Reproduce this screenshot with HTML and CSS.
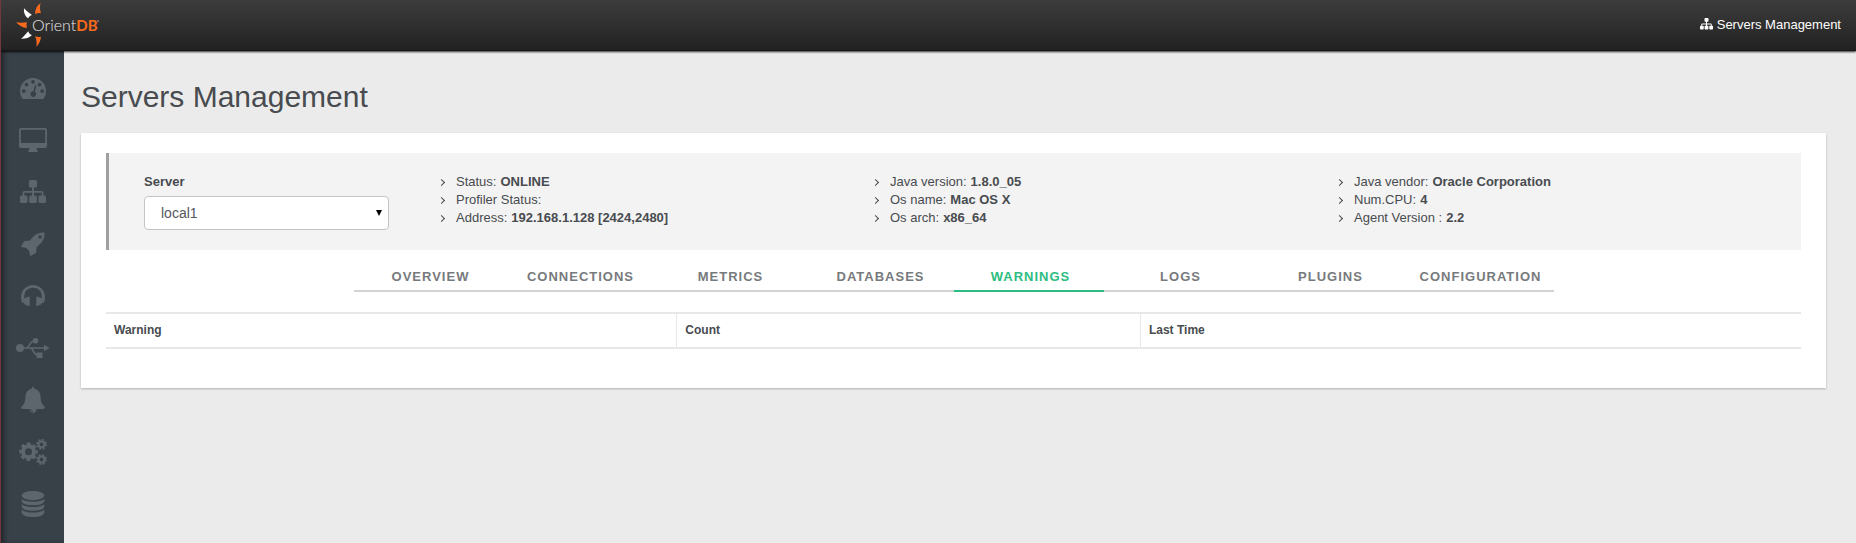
FILE: index.html
```html
<!DOCTYPE html>
<html lang="en">
<head>
<meta charset="utf-8">
<meta name="viewport" content="width=device-width, initial-scale=1">
<title>OrientDB - Servers Management</title>
<link rel="stylesheet" href="styles.css">
</head>
<body>
<header class="topbar">
  <a class="logo" href="#" aria-label="OrientDB">
    <svg width="86" height="50" viewBox="0 0 86 50">
      <g fill="#f96a1d">
        <path d="M25.5 3.2C21.5 6 20 10 20.2 14.2C21.8 13 23.800 12.800 26 13.300C25 10 24.600 7 25.500 3.200Z"/>
        <path d="M1 22.300C4.500 22.800 8.500 22.800 12 22.200C11.300 24 11.400 26 12 28C7.500 27.800 4.500 25.500 1 22.300Z"/>
        <path d="M20.200 36C21.800 37 23.800 37.300 26 36.800C25.500 40.500 24.500 44 21.200 46.800C22.200 43 21.500 39.500 20.200 36Z"/>
      </g>
      <g fill="#fff">
        <path d="M9 8.300C11.500 11.500 14.500 13 17 15C15 15.500 13.800 16.800 13.300 18.300C9.800 16.200 8.600 12.500 9 8.300Z"/>
        <path d="M6 38.800C9 36.500 11 33.500 13.300 31.200C13.800 33.200 15 34.500 17 35C14 37.800 10.500 39 6 38.800Z"/>
      </g>
      <text x="17" y="31" class="logo-text">Orient<tspan class="logo-db">DB</tspan></text>
      <circle cx="83" cy="21" r="1" fill="#99796a"/>
    </svg>
  </a>
  <a class="top-link" href="#">
    <svg width="13" height="12" viewBox="0 0 26 24" fill="currentColor"><use href="#sitemap"/></svg>
    Servers Management
  </a>
</header>
<div class="layout">
  <nav class="sidebar" aria-label="Main">
    <a href="#" aria-label="Dashboard"><svg width="26" height="21" viewBox="0 0 26 21" fill="currentColor"><path fill-rule="evenodd" d="M13 0A13 13 0 0 1 26 13Q26 17 24 20.300Q23.600 21 23 21H3Q2.400 21 2 20.300Q0 17 0 13A13 13 0 0 1 13 0ZM13 2a1.900 1.900 0 1 0 0 3.800a1.900 1.900 0 0 0 0-3.800ZM6.500 4.700a1.900 1.900 0 1 0 0 3.800a1.900 1.900 0 0 0 0-3.800ZM19.500 4.700a1.900 1.900 0 1 0 0 3.800a1.900 1.900 0 0 0 0-3.800ZM3.800 11.200a1.900 1.900 0 1 0 0 3.800a1.900 1.900 0 0 0 0-3.800ZM22.200 11.200a1.900 1.900 0 1 0 0 3.800a1.900 1.900 0 0 0 0-3.800ZM14.900 7.400L13.400 13.200A2.900 2.900 0 1 0 14.900 13.700L16.400 7.800Q16.200 6.900 14.900 7.400Z"/></svg></a>
    <a href="#" aria-label="Monitor"><svg width="28" height="24" viewBox="0 0 28 24" fill="currentColor"><path fill-rule="evenodd" d="M2 0H26Q28 0 28 2V18Q28 20 26 20H17.500Q17.500 21.500 18.800 22.600Q19 24 18 24H10Q9 24 9.200 22.600Q10.500 21.500 10.500 20H2Q0 20 0 18V2Q0 0 2 0ZM2.500 1.700Q1.800 1.700 1.800 2.400V14.200Q1.800 15 2.500 15H25.500Q26.200 15 26.200 14.200V2.400Q26.200 1.700 25.500 1.700Z"/></svg></a>
    <a href="#" aria-label="Cluster"><svg width="26" height="24" viewBox="0 0 26 24" fill="currentColor"><path id="sitemap" d="M10.500 0H15.500Q17 0 17 1.500V6Q17 7.500 15.500 7.500H14V11H21.500Q23.500 11 23.500 13V15.500H24.500Q26 15.500 26 17V21.500Q26 23 24.500 23H20Q18.500 23 18.500 21.500V17Q18.500 15.500 20 15.500H21.700V12.800H14V15.500H15.300Q16.800 15.500 16.800 17V21.500Q16.800 23 15.300 23H10.700Q9.200 23 9.200 21.500V17Q9.200 15.500 10.700 15.500H12V12.800H4.300V15.500H6Q7.500 15.500 7.500 17V21.500Q7.500 23 6 23H1.500Q0 23 0 21.500V17Q0 15.500 1.500 15.500H2.500V13Q2.500 11 4.500 11H12V7.500H10.500Q9 7.500 9 6V1.500Q9 0 10.500 0Z"/></svg></a>
    <a href="#" aria-label="Deploy"><svg width="24" height="24" viewBox="0 0 24 24" fill="currentColor"><path fill-rule="evenodd" d="M23.600 .4Q24 8 18.500 12.500L15.600 15.300L15.200 20.400Q15.100 20.800 14.800 21L9.800 23.900Q9.300 24 9.100 23.500L8 18.800L5.200 16L.6 14.900Q0 14.700 .2 14.200L3 9.300Q3.200 9 3.600 8.900L8.700 8.500L11.500 5.500Q16 .2 23.600 .4ZM19 3.200a1.800 1.800 0 1 0 0 3.600a1.800 1.800 0 0 0 0-3.600Z"/></svg></a>
    <a href="#" aria-label="Support"><svg width="24" height="22" viewBox="0 0 24 22" fill="currentColor"><path d="M12 0A12 12 0 0 1 24 12Q24 15 23 17.500L21 18Q20.300 20.200 16.800 20.500Q16.600 21.200 15.300 21V11.700Q16.700 11.400 16.900 12.100Q19.500 12.200 20.900 13.800Q21.300 3 12 2.700Q2.700 3 3.100 13.800Q4.500 12.200 7.100 12.100Q7.300 11.400 8.700 11.700V21Q7.400 21.200 7.200 20.500Q3.700 20.300 3 18L1 17.500Q0 15 0 12A12 12 0 0 1 12 0Z"/></svg></a>
    <a href="#" aria-label="Connections"><svg width="34" height="20" viewBox="0 0 34 20" fill="currentColor"><circle cx="4" cy="10" r="4"/><circle cx="19.500" cy="2.800" r="2.800"/><path d="M20.500 14.500h6v5.500h-6zM28 6.700L33.600 10L28 13.300Z"/><path d="M4 10H29M10 10C14 10 13 2.800 19 2.800M14 10C18 10 17 17.200 22 17.200" fill="none" stroke="currentColor" stroke-width="1.600"/></svg></a>
    <a href="#" aria-label="Alerts"><svg width="24" height="26" viewBox="0 0 24 26" fill="currentColor"><path d="M12 0Q13.500 .2 13.300 1.800Q19.400 3 19.600 10Q19.700 17.500 24 20Q24 22 22 22H15.500Q15.200 25.700 12 25.900Q8.800 25.700 8.500 22H2Q0 22 0 20Q4.300 17.500 4.400 10Q4.600 3 10.700 1.800Q10.500 .2 12 0Z"/><path d="M9.500 22.300Q9.800 24.500 12 24.700" class="bell-cut"/></svg></a>
    <a href="#" aria-label="Settings"><svg width="28" height="26" viewBox="0 0 28 26" fill="none" stroke="currentColor"><circle cx="9.500" cy="12.700" r="5.500" stroke-width="4"/><circle cx="9.500" cy="12.700" r="8" stroke-width="2.600" stroke-dasharray="3.700 2.583" stroke-dashoffset="1.850"/><circle cx="22.500" cy="5.300" r="2.900" stroke-width="2"/><circle cx="22.500" cy="5.300" r="4.500" stroke-width="1.800" stroke-dasharray="2 1.534"/><circle cx="22.500" cy="20.500" r="2.900" stroke-width="2"/><circle cx="22.500" cy="20.500" r="4.500" stroke-width="1.800" stroke-dasharray="2 1.534"/></svg></a>
    <a href="#" aria-label="Databases"><svg width="24" height="26" viewBox="0 0 24 26" fill="currentColor"><ellipse cx="12" cy="4.600" rx="11.300" ry="4.600"/><path d="M.7 8Q4 10.800 12 10.800T23.300 8V10.500Q22 14.200 12 14.200T.7 10.500ZM.7 13.300Q4 16.100 12 16.100T23.300 13.300V15.800Q22 19.800 12 19.800T.7 15.800ZM.7 18.800Q4 21.600 12 21.600T23.300 18.800V21.800Q22 26 12 26T.7 21.800Z"/></svg></a>
  </nav>
  <main class="content">
    <h1>Servers Management</h1>
    <section class="card">
      <div class="summary">
        <div class="server">
          <label for="server">Server</label>
          <div class="select-wrap">
            <select id="server"><option>local1</option></select>
          </div>
        </div>
        <ul class="facts">
          <li>Status: <b>ONLINE</b></li>
          <li>Profiler Status:</li>
          <li>Address: <b>192.168.1.128 [2424,2480]</b></li>
        </ul>
        <ul class="facts">
          <li>Java version: <b>1.8.0_05</b></li>
          <li>Os name: <b>Mac OS X</b></li>
          <li>Os arch: <b>x86_64</b></li>
        </ul>
        <ul class="facts">
          <li>Java vendor: <b>Oracle Corporation</b></li>
          <li>Num.CPU: <b>4</b></li>
          <li>Agent Version : <b>2.2</b></li>
        </ul>
      </div>
      <nav class="tabs" aria-label="Server sections">
        <a href="#">OVERVIEW</a>
        <a href="#">CONNECTIONS</a>
        <a href="#">METRICS</a>
        <a href="#">DATABASES</a>
        <a href="#" class="active" aria-current="page">WARNINGS</a>
        <a href="#">LOGS</a>
        <a href="#">PLUGINS</a>
        <a href="#">CONFIGURATION</a>
      </nav>
      <table class="grid">
        <colgroup><col class="col-warning"><col class="col-count"><col></colgroup>
        <thead>
          <tr><th scope="col">Warning</th><th scope="col">Count</th><th scope="col">Last Time</th></tr>
        </thead>
      </table>
    </section>
  </main>
</div>
</body>
</html>
```
FILE: styles.css
```css
*,
*::before,
*::after {
  box-sizing: border-box;
}

body {
  margin: 0;
  min-height: 100vh;
  display: flex;
  flex-direction: column;
  border-left: 1px solid #713842;
  background: #ebebeb;
  color: #484b4f;
  font: 13px/18px "Liberation Sans", Arial, sans-serif;
}

a {
  color: inherit;
  text-decoration: none;
}

.topbar {
  position: relative;
  display: flex;
  align-items: center;
  justify-content: space-between;
  height: 51px;
  padding: 0 15px 1px 14px;
  border-bottom: 1px solid #161616;
  background: linear-gradient(#3c3c3c, #222);
  box-shadow: 0 1px 2px rgba(0, 0, 0, 0.8);
  color: #fff;
}

.logo svg,
.sidebar svg {
  display: block;
}

.logo-text {
  font: 300 16px Lato, sans-serif;
  fill: #e8e8e8;
}

.logo-db {
  font-size: 15px;
  font-weight: 700;
  fill: #f96a1d;
}

.top-link svg {
  vertical-align: -1px;
}

.layout {
  display: flex;
  flex: 1;
}

.sidebar {
  display: flex;
  flex-direction: column;
  flex: none;
  width: 63px;
  padding-top: 11px;
  background: #384048;
  box-shadow: inset 5px 0 5px -2px rgba(0, 0, 0, 0.4);
  color: #5e666d;
}

.sidebar a {
  display: flex;
  align-items: center;
  justify-content: center;
  height: 52px;
}

.bell-cut {
  fill: none;
  stroke: #384048;
}

.content {
  flex: 1;
  padding: 26px 30px 26px 17px;
}

h1 {
  margin: 0 0 16px;
  font-size: 30px;
  font-weight: 400;
  line-height: 40px;
}

.card {
  padding: 20px 25px 39px;
  background: #fff;
  box-shadow: 0 1px 2px rgba(0, 0, 0, 0.25);
}

.summary {
  display: grid;
  grid-template-columns: 295fr 434fr 464fr 464fr;
  padding: 20px 0 20px 35px;
  border-left: 3px solid #a0a0a0;
  background: #f3f3f3;
}

.server {
  padding-right: 50px;
}

.server label {
  display: block;
  margin-bottom: 5px;
  font-weight: 700;
}

.select-wrap {
  position: relative;
}

.select-wrap::after {
  content: "";
  position: absolute;
  top: 14px;
  right: 7px;
  border: 3px solid transparent;
  border-top: 6px solid #000;
  border-bottom: 0;
  pointer-events: none;
}

select {
  appearance: none;
  display: block;
  width: 100%;
  height: 34px;
  padding: 0 16px;
  border: 1px solid #c4c4c4;
  border-radius: 4px;
  background: #fff;
  color: #55585c;
  font: 14px "Liberation Sans", Arial, sans-serif;
}

.facts {
  margin: 0;
  padding: 0;
  list-style: none;
}

.facts li {
  display: flex;
  align-items: center;
  gap: 4px;
}

.facts li::before {
  content: "";
  width: 5px;
  height: 5px;
  margin-right: 8px;
  border: solid #484b4f;
  border-width: 1px 1px 0 0;
  transform: rotate(45deg);
}

.tabs {
  display: grid;
  grid-template-columns: repeat(8, 150px);
  justify-content: center;
  margin: 17px 0 20px;
  padding-left: 1px;
}

.tabs a {
  padding: 1px 0 4px 3px;
  border-bottom: 2px solid #d2d2d2;
  color: #777a7d;
  font-weight: 700;
  letter-spacing: 1px;
  text-align: center;
}

.tabs .active {
  border-color: #2dbd82;
  color: #2dbd82;
}

.grid {
  width: 100%;
  border-top: 2px solid #e8e8e8;
  border-bottom: 2px solid #e8e8e8;
  border-spacing: 0;
  table-layout: fixed;
  font-size: 12px;
}

.col-warning {
  width: 33.65%;
}

.col-count {
  width: 27.35%;
}

.grid th {
  padding: 7px 8px 8px;
  text-align: left;
}

.grid th + th {
  border-left: 1px solid #e8e8e8;
}
```
